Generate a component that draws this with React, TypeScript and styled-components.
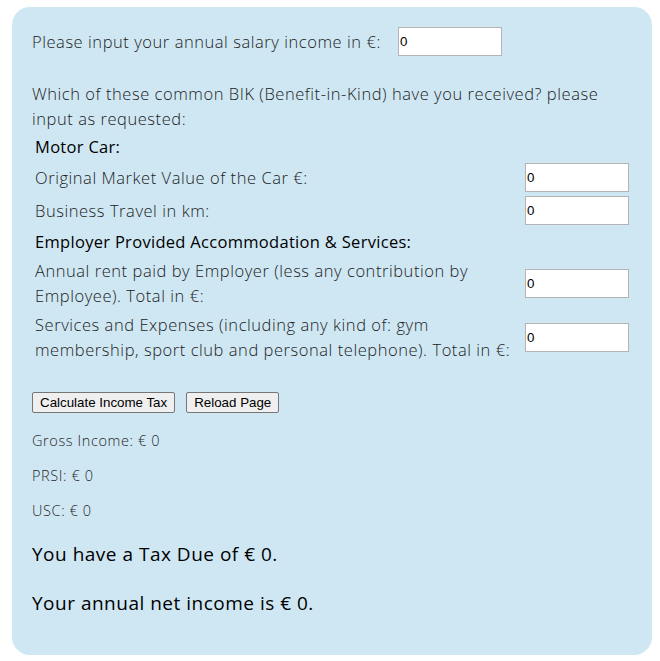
import React from "react";
import styled, { createGlobalStyle } from "styled-components";

const GlobalStyle = createGlobalStyle`
  html, body { margin: 0; padding: 0; background: #ffffff; }
  body { font-family: "Open Sans", "Noto Sans", sans-serif; }
`;

const Page = styled.div`
  padding: 7px 8px 6px 12px;
`;

const Panel = styled.main`
  box-sizing: border-box;
  width: 640px;
  background: #cfe7f3;
  border-radius: 18px;
  padding: 20px;
  color: #1c1c1c;
  font-family: "Open Sans", "Noto Sans", sans-serif;
  font-weight: 300;
`;

const BodyText = styled.div`
  font-size: 16.5px;
  line-height: 25px;
  letter-spacing: 0.55px;
`;

const SalaryRow = styled(BodyText)`
  display: flex;
  align-items: center;
  gap: 17px;
`;

const Intro = styled(BodyText)`
  margin: 25px 0 0 0;
`;

const FormGrid = styled(BodyText)`
  display: grid;
  grid-template-columns: 1fr auto;
  gap: 2px;
  padding: 2px;
`;

const SectionTitle = styled.div`
  grid-column: 1 / -1;
  padding: 1px;
  font-weight: 500;
  letter-spacing: 0.3px;
  color: #000;
`;

const FieldLabel = styled.label`
  padding: 1px;
  align-self: center;
`;

const InputCell = styled.div`
  padding: 1px;
  align-self: center;
  display: flex;
`;

const NumberInput = styled.input`
  box-sizing: border-box;
  width: 104px;
  height: 29px;
  border: 1px solid #b4b4b4;
  background: #fff;
  padding: 0 1px;
  font-family: "Liberation Sans", Arial, sans-serif;
  font-size: 13.333px;
  letter-spacing: 0;
  color: #000;
  outline: none;
`;

const ButtonRow = styled.div`
  display: flex;
  gap: 11px;
  margin-top: 27px;
`;

const Button = styled.button`
  box-sizing: border-box;
  height: 21px;
  padding: 1px 7px;
  border: 1px solid #767676;
  border-radius: 2px;
  background: #efefef;
  color: #000;
  font-family: "Liberation Sans", Arial, sans-serif;
  font-size: 13.333px;
  line-height: 17px;
`;

const ResultList = styled.div`
  display: flex;
  flex-direction: column;
  gap: 14px;
  margin-top: 17px;
`;

const ResultLine = styled.p`
  margin: 0;
  font-size: 14.5px;
  line-height: 21px;
  letter-spacing: 0.6px;
  color: #262626;
`;

const SummaryList = styled.div`
  display: flex;
  flex-direction: column;
  gap: 19px;
  margin: 18px 0 17px 0;
`;

const Summary = styled.p`
  margin: 0;
  font-size: 19px;
  line-height: 30px;
  letter-spacing: 0.5px;
  font-weight: 400;
  color: #000;
`;

export default function App() {
  return (
    <>
      <GlobalStyle />
      <Page>
        <Panel>
          <SalaryRow>
            <span>Please input your annual salary income in €:</span>
            <NumberInput type="text" defaultValue="0" />
          </SalaryRow>
          <Intro>
            Which of these common BIK (Benefit-in-Kind) have you received? please
            <br />
            input as requested:
          </Intro>
          <FormGrid>
            <SectionTitle>Motor Car:</SectionTitle>
            <FieldLabel>Original Market Value of the Car €:</FieldLabel>
            <InputCell>
              <NumberInput type="text" defaultValue="0" />
            </InputCell>
            <FieldLabel>Business Travel in km:</FieldLabel>
            <InputCell>
              <NumberInput type="text" defaultValue="0" />
            </InputCell>
            <SectionTitle>Employer Provided Accommodation &amp; Services:</SectionTitle>
            <FieldLabel>
              Annual rent paid by Employer (less any contribution by
              <br />
              Employee). Total in €:
            </FieldLabel>
            <InputCell>
              <NumberInput type="text" defaultValue="0" />
            </InputCell>
            <FieldLabel>
              Services and Expenses (including any kind of: gym
              <br />
              membership, sport club and personal telephone). Total in €:
            </FieldLabel>
            <InputCell>
              <NumberInput type="text" defaultValue="0" />
            </InputCell>
          </FormGrid>
          <ButtonRow>
            <Button type="button">Calculate Income Tax</Button>
            <Button type="button">Reload Page</Button>
          </ButtonRow>
          <ResultList>
            <ResultLine>Gross Income: € 0</ResultLine>
            <ResultLine>PRSI: € 0</ResultLine>
            <ResultLine>USC: € 0</ResultLine>
          </ResultList>
          <SummaryList>
            <Summary>You have a Tax Due of € 0.</Summary>
            <Summary>Your annual net income is € 0.</Summary>
          </SummaryList>
        </Panel>
      </Page>
    </>
  );
}
